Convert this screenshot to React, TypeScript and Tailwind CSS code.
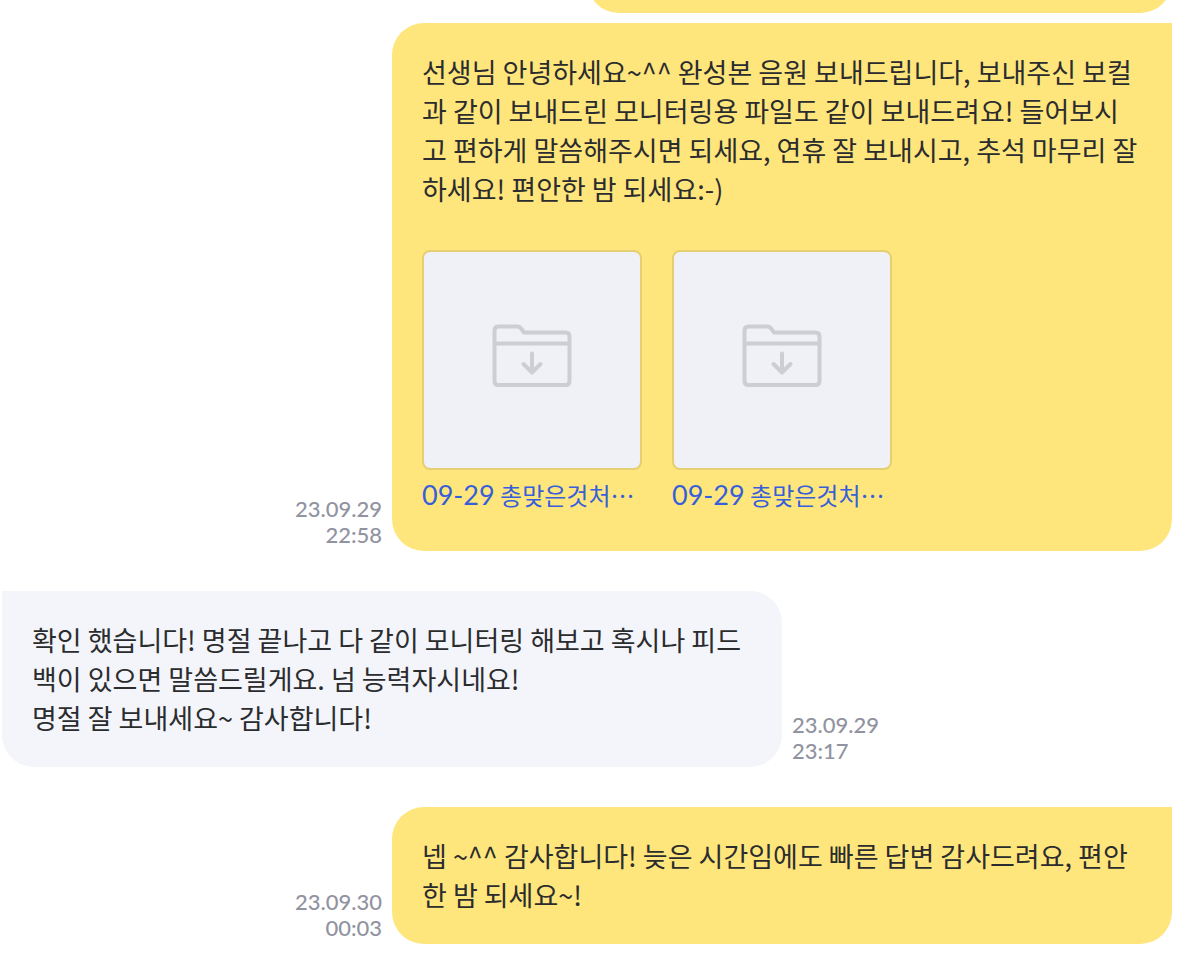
import type { ReactNode } from 'react';

type MessageProps = {
  mine?: boolean;
  date: string;
  time: string;
  children: ReactNode;
};

const files = [
  { id: 1, date: '09-29', name: '총맞은것처⋯' },
  { id: 2, date: '09-29', name: '총맞은것처⋯' },
];

function FolderIcon() {
  return (
    <svg
      width="80"
      height="64"
      viewBox="0 0 80 64"
      fill="none"
      stroke="#CDCED3"
      strokeWidth="4"
      strokeLinecap="round"
      strokeLinejoin="round"
      aria-hidden="true"
    >
      <path d="M2.5 6.5Q2.5 2.5 6.5 2.5H25Q28 2.5 29.5 5L32 8.500H73.500Q77.500 8.500 77.500 12.500V57Q77.500 61 73.500 61H6.500Q2.500 61 2.500 57Z" />
      <path d="M3 19.500H77" />
      <path d="M40 29.500V48M31.500 40L40 48.500L48.500 40" />
    </svg>
  );
}

function FileCard({ date, name }: { date: string; name: string }) {
  return (
    <a href="#" className="block w-[220px] text-[#365FD9]">
      <span className="flex h-[220px] items-center justify-center rounded-lg border-2 border-[#E6CF70] bg-[#EFF1F7] pb-2">
        <FolderIcon />
      </span>
      <span className="mt-[7px] block h-9 truncate text-2xl leading-9">
        <span className="font-[Lato] text-[27px]">{date}</span> {name}
      </span>
    </a>
  );
}

function Message({ mine = false, date, time, children }: MessageProps) {
  return (
    <li className={`flex items-end gap-[10px] ${mine ? 'flex-row-reverse' : ''}`}>
      <div
        className={`w-2/3 rounded-[32px] px-[30px] pt-[29px] pb-[30px] text-[27px] leading-[39px] break-all text-[#2B2C2E] ${
          mine ? 'rounded-tr-none bg-[#FFE67C]' : 'rounded-tl-none bg-[#F3F5FA]'
        }`}
      >
        {children}
      </div>
      <time
        className={`pb-[3px] font-[Lato] text-[22px] leading-[26px] font-medium text-[#9193A1] ${
          mine ? 'text-right' : ''
        }`}
      >
        {date}
        <br />
        {time}
      </time>
    </li>
  );
}

export default function App() {
  return (
    <main className="min-h-screen bg-white pr-7 pl-[2px] font-['Noto_Sans_CJK_KR',sans-serif]">
      {/* Tail of the previous message */}
      <div className="mb-[10px] flex h-[13px] flex-col items-end justify-end overflow-hidden">
        <div className="h-16 w-1/2 shrink-0 rounded-[32px] bg-[#FFE67C]" />
      </div>

      <ul className="flex flex-col gap-10">
        <Message mine date="23.09.29" time="22:58">
          <p>
            선생님 안녕하세요~^^ 완성본 음원 보내드립니다, 보내주신 보컬과 같이 보내드린
            모니터링용 파일도 같이 보내드려요! 들어보시고 편하게 말씀해주시면 되세요, 연휴 잘
            보내시고, 추석 마무리 잘하세요! 편안한 밤 되세요:-)
          </p>
          <div className="mt-[42px] mb-2 flex gap-[30px]">
            {files.map((file) => (
              <FileCard key={file.id} date={file.date} name={file.name} />
            ))}
          </div>
        </Message>

        <Message date="23.09.29" time="23:17">
          <p>
            확인 했습니다! 명절 끝나고 다 같이 모니터링 해보고 혹시나 피드백이 있으면
            말씀드릴게요. 넘 능력자시네요!
            <br />
            명절 잘 보내세요~ 감사합니다!
          </p>
        </Message>

        <Message mine date="23.09.30" time="00:03">
          <p>
            넵 ~^^ 감사합니다! 늦은 시간임에도 빠른 답변 감사드려요, 편안한 밤 되세요~!
          </p>
        </Message>
      </ul>
    </main>
  );
}
